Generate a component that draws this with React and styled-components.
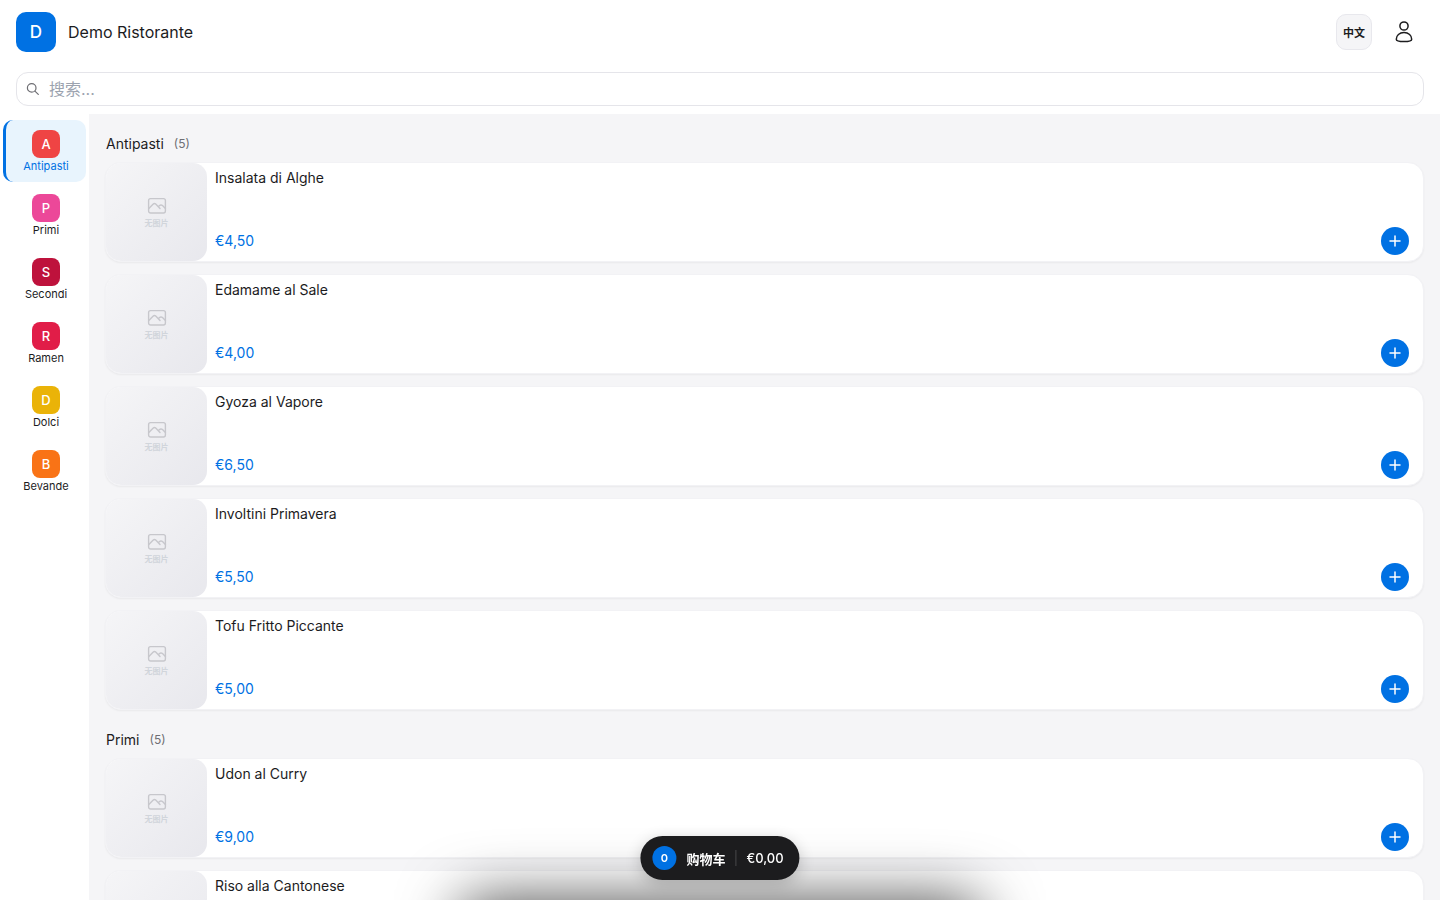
import React, { useState } from "react";
import styled, { createGlobalStyle } from "styled-components";

const GlobalStyle = createGlobalStyle`
  *, *::before, *::after { box-sizing: border-box; }
  html, body, #root { height: 100%; }
  body {
    margin: 0;
    overflow: hidden;
    background: #ffffff;
    color: #1c1c1e;
    font-family: Inter, "Noto Sans CJK SC", sans-serif;
  }
  button, input { font: inherit; color: inherit; }
  button { border: 0; padding: 0; background: none; cursor: pointer; }
  h1, h2, h3, p { margin: 0; font-weight: 400; }
`;

const Page = styled.div`
  display: flex;
  flex-direction: column;
  height: 100vh;
  overflow: hidden;
`;

const Header = styled.header`
  display: flex;
  align-items: center;
  gap: 12px;
  height: 64px;
  padding: 0 16px;
  flex: none;
`;

const Logo = styled.div`
  display: grid;
  place-items: center;
  width: 40px;
  height: 40px;
  border-radius: 10px;
  background: #0071e3;
  color: #fff;
  font-size: 17px;
  font-weight: 500;
`;

const Title = styled.h1`
  flex: 1;
  font-size: 16px;
  line-height: 24px;
`;

const HeaderActions = styled.div`
  display: flex;
  align-items: center;
  gap: 12px;
`;

const LanguageButton = styled.button`
  width: 36px;
  height: 36px;
  border: 1px solid #e8e8ed;
  border-radius: 10px;
  background: #f5f5f7;
  font-size: 11px;
  font-weight: 700;
`;

const AccountButton = styled.button`
  display: grid;
  place-items: center;
  width: 40px;
  height: 40px;
`;

const SearchArea = styled.div`
  flex: none;
  padding: 8px 16px;
`;

const SearchField = styled.label`
  display: flex;
  align-items: center;
  gap: 9px;
  height: 34px;
  padding: 0 9px;
  border: 1px solid #e5e5ea;
  border-radius: 12px;
  color: #6e6e73;
`;

const SearchInput = styled.input`
  flex: 1;
  min-width: 0;
  height: 32px;
  padding: 0;
  border: 0;
  outline: 0;
  background: transparent;
  color: #1c1c1e;
  font-size: 16px;
  &::placeholder { color: #9ca3af; opacity: 1; }
`;

const Body = styled.div`
  display: flex;
  flex: 1;
  min-height: 0;
`;

const Sidebar = styled.nav`
  display: flex;
  flex-direction: column;
  gap: 2px;
  flex: none;
  width: 89px;
  padding: 6px 3px;
`;

const Category = styled.button`
  display: flex;
  flex-direction: column;
  align-items: center;
  gap: 1px;
  height: 62px;
  padding: 10px 0 0;
  border-left: 3px solid ${(p) => (p.$active ? "#0071e3" : "transparent")};
  border-radius: 10px;
  background: ${(p) => (p.$active ? "#e8f4fd" : "transparent")};
  color: ${(p) => (p.$active ? "#0071e3" : "#1c1c1e")};
  font-size: 11px;
  line-height: 14px;
`;

const CategoryBadge = styled.span`
  display: grid;
  place-items: center;
  width: 28px;
  height: 28px;
  border-radius: 8px;
  background: ${(p) => p.$color};
  color: #fff;
  font-size: 13px;
  font-weight: 500;
`;

const Menu = styled.main`
  flex: 1;
  min-width: 0;
  overflow: hidden;
  padding: 20px 16px;
  background: #f5f5f7;
`;

const Section = styled.section`
  margin-bottom: 20px;
`;

const SectionHeader = styled.div`
  display: flex;
  align-items: center;
  gap: 10px;
  height: 20px;
  margin: 0 1px 8px;
`;

const SectionTitle = styled.h2`
  font-size: 14px;
  line-height: 20px;
`;

const SectionCount = styled.span`
  color: #6e6e73;
  font-size: 12px;
  line-height: 16px;
`;

const DishList = styled.div`
  display: flex;
  flex-direction: column;
  gap: 12px;
`;

const DishCard = styled.article`
  display: flex;
  height: 100px;
  border: 1px solid #f2f2f5;
  border-radius: 16px;
  background: #fff;
  box-shadow: 0 1px 2px rgba(0, 0, 0, 0.05);
  overflow: hidden;
`;

const Placeholder = styled.div`
  display: flex;
  flex-direction: column;
  align-items: center;
  justify-content: center;
  width: 101px;
  flex: none;
  padding-top: 2px;
  border-radius: 14px;
  background: linear-gradient(135deg, #f5f5f7, #e8e8ed);
  color: #c7c7cc;
  font-size: 8px;
  line-height: 14px;
`;

const PlaceholderText = styled.span`
  color: #d1d5db;
  font-weight: 700;
`;

const DishInfo = styled.div`
  display: flex;
  flex: 1;
  flex-direction: column;
  justify-content: space-between;
  padding: 5px 14px 6px 8px;
`;

const DishName = styled.h3`
  font-size: 14px;
  line-height: 20px;
`;

const DishFooter = styled.div`
  display: flex;
  align-items: center;
  justify-content: space-between;
`;

const Price = styled.p`
  color: #0071e3;
  font-size: 14px;
  line-height: 20px;
`;

const AddButton = styled.button`
  display: grid;
  place-items: center;
  width: 28px;
  height: 28px;
  border-radius: 50%;
  background: #0071e3;
  color: #fff;
`;

const SheetShadow = styled.div`
  position: fixed;
  top: 100%;
  left: 50%;
  width: 520px;
  height: 400px;
  transform: translateX(-50%);
  border-radius: 20px 20px 0 0;
  box-shadow: 0 0 60px rgba(0, 0, 0, 0.7);
`;

const CartBar = styled.button`
  position: fixed;
  bottom: 20px;
  left: 50%;
  transform: translateX(-50%);
  display: flex;
  align-items: center;
  gap: 10px;
  height: 44px;
  padding: 0 16px 0 12px;
  border-radius: 22px;
  background: #1c1c1e;
  color: #fff;
  font-size: 13px;
  font-weight: 600;
  white-space: nowrap;
  box-shadow: 0 4px 16px rgba(0, 0, 0, 0.2);
`;

const CartCount = styled.span`
  display: grid;
  place-items: center;
  width: 24px;
  height: 24px;
  border-radius: 50%;
  background: #0071e3;
  font-size: 11px;
`;

const CartTotal = styled.span`
  font-weight: 500;
`;

const CartDivider = styled.span`
  width: 1px;
  height: 16px;
  background: rgba(255, 255, 255, 0.2);
`;

const SearchIcon = () => (
  <svg width="14" height="14" viewBox="0 0 14 14" fill="none" stroke="currentColor" strokeWidth="1.2" strokeLinecap="round" aria-hidden="true">
    <circle cx="5.7" cy="5.9" r="4.3" />
    <path d="M8.9 9.1 12.3 12.4" />
  </svg>
);

const UserIcon = () => (
  <svg width="24" height="24" viewBox="0 0 24 24" fill="none" stroke="currentColor" strokeWidth="1.5" aria-hidden="true">
    <circle cx="12" cy="6" r="4.1" />
    <path d="M4.3 19.2C4.3 15.4 7.4 12.6 12 12.6s7.7 2.8 7.7 6.6c0 1.600-3.300 2.400-7.700 2.400s-7.700-.8-7.700-2.400Z" />
  </svg>
);

const ImageIcon = () => (
  <svg width="20" height="20" viewBox="0 0 20 20" fill="none" stroke="currentColor" strokeWidth="1.4" strokeLinecap="round" strokeLinejoin="round" aria-hidden="true">
    <rect x="1.6" y="2.6" width="16.8" height="14.4" rx="2" />
    <path d="M1.8 12.6 6 8.2q1.500-1.500 3 0l4 4.300M11.300 10.700l1.200-1.100q1.500-1.400 3 0l2.900 2.900" />
  </svg>
);

const PlusIcon = () => (
  <svg width="12" height="12" viewBox="0 0 12 12" fill="none" stroke="currentColor" strokeWidth="1.5" strokeLinecap="round" aria-hidden="true">
    <path d="M6 1v10M1 6h10" />
  </svg>
);

const categories = [
  ["Antipasti", "#ef4444"],
  ["Primi", "#ec4899"],
  ["Secondi", "#be123c"],
  ["Ramen", "#e11d48"],
  ["Dolci", "#eab308"],
  ["Bevande", "#f97316"],
];

const sections = [
  {
    name: "Antipasti",
    count: 5,
    dishes: [
      ["Insalata di Alghe", "€4,50"],
      ["Edamame al Sale", "€4,00"],
      ["Gyoza al Vapore", "€6,50"],
      ["Involtini Primavera", "€5,50"],
      ["Tofu Fritto Piccante", "€5,00"],
    ],
  },
  {
    name: "Primi",
    count: 5,
    dishes: [
      ["Udon al Curry", "€9,00"],
      ["Riso alla Cantonese", ""],
    ],
  },
];

function Dish({ name, price }) {
  return (
    <DishCard>
      <Placeholder>
        <ImageIcon />
        <PlaceholderText>无图片</PlaceholderText>
      </Placeholder>
      <DishInfo>
        <DishName>{name}</DishName>
        <DishFooter>
          <Price>{price}</Price>
          <AddButton type="button" aria-label={name}>
            <PlusIcon />
          </AddButton>
        </DishFooter>
      </DishInfo>
    </DishCard>
  );
}

export default function App() {
  const [active, setActive] = useState("Antipasti");
  const [query, setQuery] = useState("");
  return (
    <Page>
      <GlobalStyle />
      <Header>
        <Logo>D</Logo>
        <Title>Demo Ristorante</Title>
        <HeaderActions>
          <LanguageButton type="button">中文</LanguageButton>
          <AccountButton type="button" aria-label="Account">
            <UserIcon />
          </AccountButton>
        </HeaderActions>
      </Header>
      <SearchArea>
        <SearchField>
          <SearchIcon />
          <SearchInput
            type="text"
            aria-label="搜索"
            placeholder="搜索..."
            value={query}
            onChange={(e) => setQuery(e.target.value)}
          />
        </SearchField>
      </SearchArea>
      <Body>
        <Sidebar>
          {categories.map(([name, color]) => (
            <Category key={name} type="button" $active={name === active} onClick={() => setActive(name)}>
              <CategoryBadge $color={color}>{name[0]}</CategoryBadge>
              {name}
            </Category>
          ))}
        </Sidebar>
        <Menu>
          {sections.map((section) => (
            <Section key={section.name}>
              <SectionHeader>
                <SectionTitle>{section.name}</SectionTitle>
                <SectionCount>({section.count})</SectionCount>
              </SectionHeader>
              <DishList>
                {section.dishes.map(([name, price]) => (
                  <Dish key={name} name={name} price={price} />
                ))}
              </DishList>
            </Section>
          ))}
        </Menu>
      </Body>
      <SheetShadow />
      <CartBar type="button">
        <CartCount>0</CartCount>
        <span>购物车</span>
        <CartDivider />
        <CartTotal>€0,00</CartTotal>
      </CartBar>
    </Page>
  );
}
